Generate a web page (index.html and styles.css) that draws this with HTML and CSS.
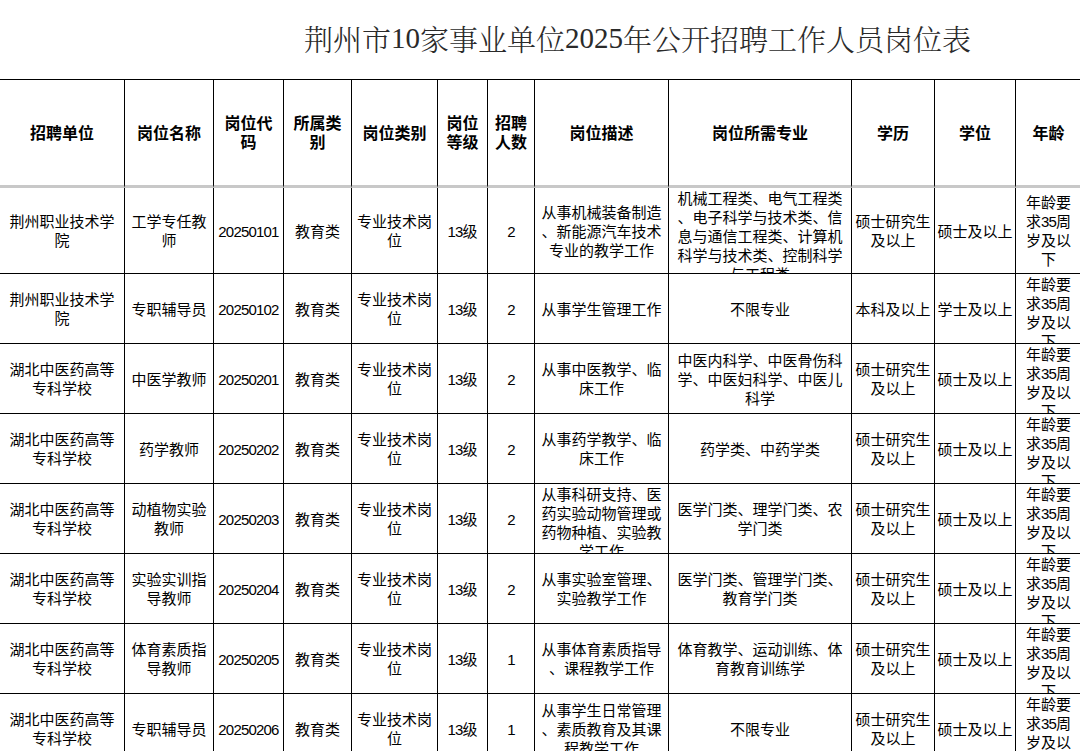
FILE: index.html
```html
<!DOCTYPE html>
<html lang="zh-CN">
<head>
<meta charset="utf-8">
<title>荆州市10家事业单位2025年公开招聘工作人员岗位表</title>
<link rel="stylesheet" href="styles.css">
</head>
<body>
<div class="page">
  <h1 class="title">荆州市<span class="tnum">10</span>家事业单位<span class="tnum">2025</span>年公开招聘工作人员岗位表</h1>
  <div class="sheet">
    <div class="row head">
      <div class="cell"><div class="txt">招聘单位</div></div>
      <div class="cell"><div class="txt">岗位名称</div></div>
      <div class="cell"><div class="txt">岗位代<br>码</div></div>
      <div class="cell"><div class="txt">所属类<br>别</div></div>
      <div class="cell"><div class="txt">岗位类别</div></div>
      <div class="cell"><div class="txt">岗位<br>等级</div></div>
      <div class="cell"><div class="txt">招聘<br>人数</div></div>
      <div class="cell"><div class="txt">岗位描述</div></div>
      <div class="cell"><div class="txt">岗位所需专业</div></div>
      <div class="cell"><div class="txt">学历</div></div>
      <div class="cell"><div class="txt">学位</div></div>
      <div class="cell last"><div class="txt">年龄</div></div>
    </div>

    <div class="row tall">
      <div class="cell"><div class="txt">荆州职业技术学<br>院</div></div>
      <div class="cell"><div class="txt">工学专任教<br>师</div></div>
      <div class="cell"><div class="txt num">20250101</div></div>
      <div class="cell"><div class="txt">教育类</div></div>
      <div class="cell"><div class="txt">专业技术岗<br>位</div></div>
      <div class="cell"><div class="txt"><span class="num">13</span>级</div></div>
      <div class="cell"><div class="txt num">2</div></div>
      <div class="cell"><div class="txt">从事机械装备制造<br>、新能源汽车技术<br>专业的教学工作</div></div>
      <div class="cell"><div class="txt">机械工程类、电气工程类<br>、电子科学与技术类、信<br>息与通信工程类、计算机<br>科学与技术类、控制科学<br>与工程类</div></div>
      <div class="cell"><div class="txt">硕士研究生<br>及以上</div></div>
      <div class="cell"><div class="txt">硕士及以上</div></div>
      <div class="cell last"><div class="txt">年龄要<br>求<span class="num">35</span>周<br>岁及以<br>下</div></div>
    </div>

    <div class="row">
      <div class="cell"><div class="txt">荆州职业技术学<br>院</div></div>
      <div class="cell"><div class="txt">专职辅导员</div></div>
      <div class="cell"><div class="txt num">20250102</div></div>
      <div class="cell"><div class="txt">教育类</div></div>
      <div class="cell"><div class="txt">专业技术岗<br>位</div></div>
      <div class="cell"><div class="txt"><span class="num">13</span>级</div></div>
      <div class="cell"><div class="txt num">2</div></div>
      <div class="cell"><div class="txt">从事学生管理工作</div></div>
      <div class="cell"><div class="txt">不限专业</div></div>
      <div class="cell"><div class="txt">本科及以上</div></div>
      <div class="cell"><div class="txt">学士及以上</div></div>
      <div class="cell last"><div class="txt">年龄要<br>求<span class="num">35</span>周<br>岁及以<br>下</div></div>
    </div>

    <div class="row">
      <div class="cell"><div class="txt">湖北中医药高等<br>专科学校</div></div>
      <div class="cell"><div class="txt">中医学教师</div></div>
      <div class="cell"><div class="txt num">20250201</div></div>
      <div class="cell"><div class="txt">教育类</div></div>
      <div class="cell"><div class="txt">专业技术岗<br>位</div></div>
      <div class="cell"><div class="txt"><span class="num">13</span>级</div></div>
      <div class="cell"><div class="txt num">2</div></div>
      <div class="cell"><div class="txt">从事中医教学、临<br>床工作</div></div>
      <div class="cell"><div class="txt">中医内科学、中医骨伤科<br>学、中医妇科学、中医儿<br>科学</div></div>
      <div class="cell"><div class="txt">硕士研究生<br>及以上</div></div>
      <div class="cell"><div class="txt">硕士及以上</div></div>
      <div class="cell last"><div class="txt">年龄要<br>求<span class="num">35</span>周<br>岁及以<br>下</div></div>
    </div>

    <div class="row">
      <div class="cell"><div class="txt">湖北中医药高等<br>专科学校</div></div>
      <div class="cell"><div class="txt">药学教师</div></div>
      <div class="cell"><div class="txt num">20250202</div></div>
      <div class="cell"><div class="txt">教育类</div></div>
      <div class="cell"><div class="txt">专业技术岗<br>位</div></div>
      <div class="cell"><div class="txt"><span class="num">13</span>级</div></div>
      <div class="cell"><div class="txt num">2</div></div>
      <div class="cell"><div class="txt">从事药学教学、临<br>床工作</div></div>
      <div class="cell"><div class="txt">药学类、中药学类</div></div>
      <div class="cell"><div class="txt">硕士研究生<br>及以上</div></div>
      <div class="cell"><div class="txt">硕士及以上</div></div>
      <div class="cell last"><div class="txt">年龄要<br>求<span class="num">35</span>周<br>岁及以<br>下</div></div>
    </div>

    <div class="row">
      <div class="cell"><div class="txt">湖北中医药高等<br>专科学校</div></div>
      <div class="cell"><div class="txt">动植物实验<br>教师</div></div>
      <div class="cell"><div class="txt num">20250203</div></div>
      <div class="cell"><div class="txt">教育类</div></div>
      <div class="cell"><div class="txt">专业技术岗<br>位</div></div>
      <div class="cell"><div class="txt"><span class="num">13</span>级</div></div>
      <div class="cell"><div class="txt num">2</div></div>
      <div class="cell"><div class="txt">从事科研支持、医<br>药实验动物管理或<br>药物种植、实验教<br>学工作</div></div>
      <div class="cell"><div class="txt">医学门类、理学门类、农<br>学门类</div></div>
      <div class="cell"><div class="txt">硕士研究生<br>及以上</div></div>
      <div class="cell"><div class="txt">硕士及以上</div></div>
      <div class="cell last"><div class="txt">年龄要<br>求<span class="num">35</span>周<br>岁及以<br>下</div></div>
    </div>

    <div class="row">
      <div class="cell"><div class="txt">湖北中医药高等<br>专科学校</div></div>
      <div class="cell"><div class="txt">实验实训指<br>导教师</div></div>
      <div class="cell"><div class="txt num">20250204</div></div>
      <div class="cell"><div class="txt">教育类</div></div>
      <div class="cell"><div class="txt">专业技术岗<br>位</div></div>
      <div class="cell"><div class="txt"><span class="num">13</span>级</div></div>
      <div class="cell"><div class="txt num">2</div></div>
      <div class="cell"><div class="txt">从事实验室管理、<br>实验教学工作</div></div>
      <div class="cell"><div class="txt">医学门类、管理学门类、<br>教育学门类</div></div>
      <div class="cell"><div class="txt">硕士研究生<br>及以上</div></div>
      <div class="cell"><div class="txt">硕士及以上</div></div>
      <div class="cell last"><div class="txt">年龄要<br>求<span class="num">35</span>周<br>岁及以<br>下</div></div>
    </div>

    <div class="row">
      <div class="cell"><div class="txt">湖北中医药高等<br>专科学校</div></div>
      <div class="cell"><div class="txt">体育素质指<br>导教师</div></div>
      <div class="cell"><div class="txt num">20250205</div></div>
      <div class="cell"><div class="txt">教育类</div></div>
      <div class="cell"><div class="txt">专业技术岗<br>位</div></div>
      <div class="cell"><div class="txt"><span class="num">13</span>级</div></div>
      <div class="cell"><div class="txt num">1</div></div>
      <div class="cell"><div class="txt">从事体育素质指导<br>、课程教学工作</div></div>
      <div class="cell"><div class="txt">体育教学、运动训练、体<br>育教育训练学</div></div>
      <div class="cell"><div class="txt">硕士研究生<br>及以上</div></div>
      <div class="cell"><div class="txt">硕士及以上</div></div>
      <div class="cell last"><div class="txt">年龄要<br>求<span class="num">35</span>周<br>岁及以<br>下</div></div>
    </div>

    <div class="row">
      <div class="cell"><div class="txt">湖北中医药高等<br>专科学校</div></div>
      <div class="cell"><div class="txt">专职辅导员</div></div>
      <div class="cell"><div class="txt num">20250206</div></div>
      <div class="cell"><div class="txt">教育类</div></div>
      <div class="cell"><div class="txt">专业技术岗<br>位</div></div>
      <div class="cell"><div class="txt"><span class="num">13</span>级</div></div>
      <div class="cell"><div class="txt num">1</div></div>
      <div class="cell"><div class="txt">从事学生日常管理<br>、素质教育及其课<br>程教学工作</div></div>
      <div class="cell"><div class="txt">不限专业</div></div>
      <div class="cell"><div class="txt">硕士研究生<br>及以上</div></div>
      <div class="cell"><div class="txt">硕士及以上</div></div>
      <div class="cell last"><div class="txt">年龄要<br>求<span class="num">35</span>周<br>岁及以<br>下</div></div>
    </div>
  </div>
</div>
</body>
</html>
```

FILE: styles.css
```css
html, body {
  margin: 0;
  padding: 0;
  background: #fff;
}

body {
  width: 1080px;
  height: 751px;
  overflow: hidden;
  font-family: "Liberation Sans", "Noto Sans CJK SC", sans-serif;
  color: #000;
}

.page {
  width: 1080px;
}

.title {
  margin: 0;
  height: 79px;
  display: flex;
  align-items: center;
  padding-left: 304px;
  padding-bottom: 2px;
  box-sizing: border-box;
  font-family: "Noto Serif CJK SC", "Liberation Serif", "Noto Sans CJK SC", serif;
  font-size: 29px;
  font-weight: 300;
  color: #2a2a2a;
  white-space: nowrap;
}

.tnum {
  font-family: "Liberation Serif", serif;
  font-weight: 400;
}

.sheet {
  border-top: 1px solid #000;
  width: 1080px;
}

.row {
  display: grid;
  grid-template-columns: 125px 89px 70px 68px 86px 50px 47px 134px 183px 83px 81px 80px;
  height: 70px;
}

.row.tall {
  height: 86px;
}

.row.head {
  height: 108px;
}

.cell {
  box-sizing: border-box;
  border-right: 1px solid #000;
  border-bottom: 1px solid #000;
  display: flex;
  flex-direction: column;
  overflow: hidden;
  padding: 1px 1px 0;
  text-align: center;
  font-size: 15px;
  line-height: 19px;
  white-space: nowrap;
}

.cell.last {
  border-right: none;
  padding-right: 16px;
}

.head .cell {
  border-bottom: 3px solid #c8c8c8;
  font-size: 16px;
  font-weight: 700;
  line-height: 19px;
}

.txt {
  margin-top: auto;
  margin-bottom: auto;
}

.num {
  letter-spacing: -0.8px;
}
```
